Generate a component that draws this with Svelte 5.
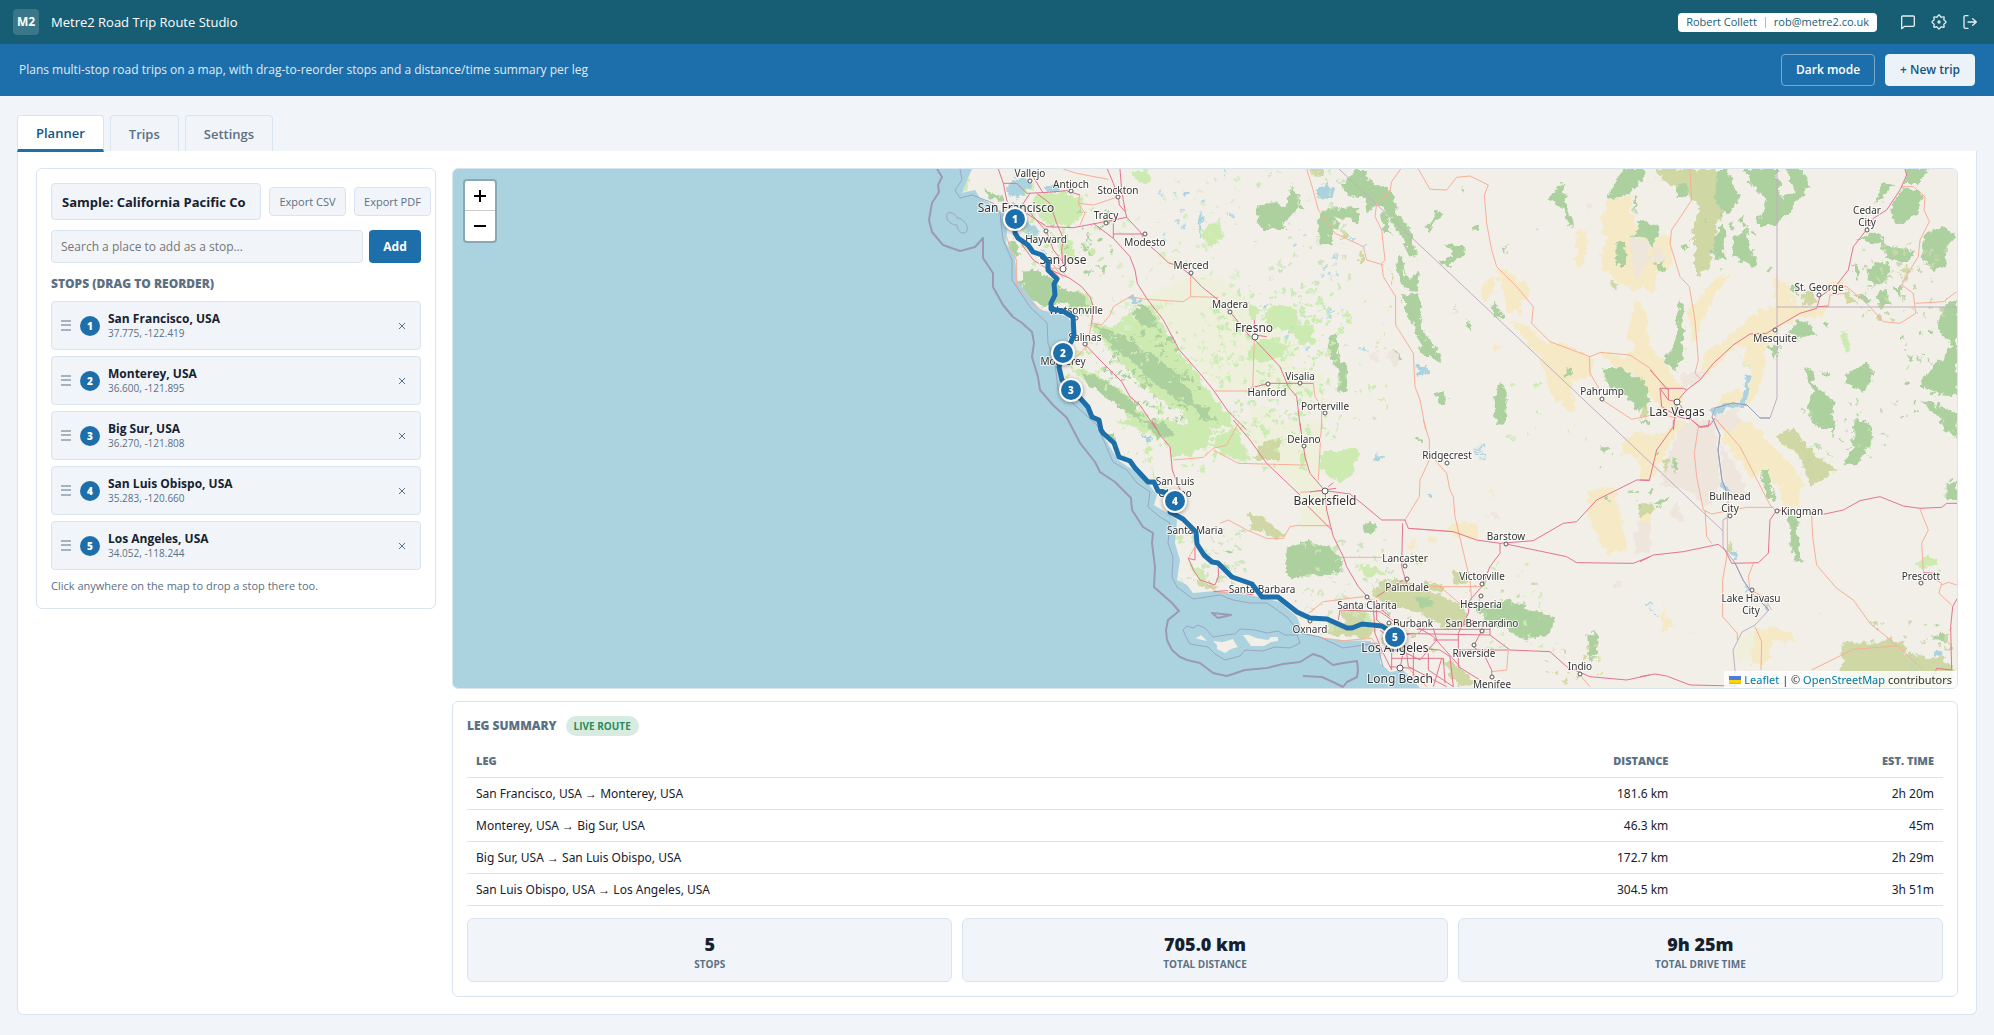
<script>
let tab = 'Planner'
let tripName = 'Sample: California Pacific Co'
let query = ''

const tabs = ['Planner', 'Trips', 'Settings']

let stops = [
  { name: 'San Francisco, USA', pos: '37.775, -122.419', x: 1015, y: 219 },
  { name: 'Monterey, USA', pos: '36.600, -121.895', x: 1063, y: 353 },
  { name: 'Big Sur, USA', pos: '36.270, -121.808', x: 1071, y: 390 },
  { name: 'San Luis Obispo, USA', pos: '35.283, -120.660', x: 1175, y: 501 },
  { name: 'Los Angeles, USA', pos: '34.052, -118.244', x: 1395, y: 637 }
]

const legs = [
  ['San Francisco, USA → Monterey, USA', '181.6 km', '2h 20m'],
  ['Monterey, USA → Big Sur, USA', '46.3 km', '45m'],
  ['Big Sur, USA → San Luis Obispo, USA', '172.7 km', '2h 29m'],
  ['San Luis Obispo, USA → Los Angeles, USA', '304.5 km', '3h 51m']
]

const totals = [
  ['5', 'Stops'],
  ['705.0 km', 'Total distance'],
  ['9h 25m', 'Total drive time']
]

// map tiles: each one has its own origin and is drawn at a third of its units
const tiles = [
  {
    x: 900, y: 160,
    farm: 'M700,440 760,400 870,345 950,350 1050,420 1050,700 960,690 900,620 840,550 790,470z M770,280 850,300 860,330 800,320z',
    light: 'M570,490 640,500 700,450 760,430 790,500 840,580 900,650 930,700 980,760 1000,800 880,810 850,760 780,720 700,650 640,580 580,520z M400,105 500,95 540,120 550,160 520,195 440,190 400,150z M500,615 560,630 620,660 700,720 760,790 765,810 710,810 640,710 550,660z M185,98 205,50 215,60 200,95z M690,30 740,30 750,65 710,70z M900,220 960,170 970,230 930,260z M480,390 560,400 590,440 560,470 500,440z M460,220 510,240 530,290 500,300z',
    wood: 'M370,335 410,330 450,350 480,380 540,400 575,440 520,440 470,430 430,440 380,410 360,370z M322,240 345,240 362,290 345,290z M250,85 300,110 310,125 270,115z M580,500 640,515 700,550 780,600 830,640 865,690 890,745 820,710 750,660 690,600 640,560z M690,450 730,430 760,470 770,510 720,490z M540,635 620,665 700,730 730,790 680,760 620,710 560,670z M550,330 570,320 560,350z M590,320 615,315 610,335z M880,730 920,740 950,790 900,770z',
    water: 'M325,80 345,55 395,60 390,90 355,115 325,105z M330,125 370,130 375,175 415,210 418,262 395,240 355,200z M430,85 450,72 480,78 470,92 440,95z M420,265 450,285 440,290z M850,90 870,100 860,115z M890,170 905,150 912,190 898,225z M685,415 705,405 725,425 710,432z',
    sand: '', pink: '', scrub: '',
    red: 'M622,27 640,70 655,110 658,135 675,155 M660,27 665,90 675,150 680,172 720,215 740,250 770,275 805,308 840,320 872,345 905,380 955,420 990,455 1050,530 M580,190 640,235 690,290 705,330 712,370 740,415 790,480 838,570 900,640 940,690 985,755 1040,810 M345,210 370,260 400,300 440,325 510,355 545,380 570,410 580,440 575,490 M555,553 600,600 640,640 665,665 690,710 720,735 770,810 M410,100 450,130 470,190 490,235 485,270 490,330 M380,160 440,200 520,203 600,188 680,172 M295,27 310,70 320,120 345,170 M310,70 350,70 380,100 445,97 500,92 540,105 M390,100 370,130 400,170 440,215 460,270 500,320 M640,190 V235 M385,27 430,100 M640,222 H735',
    orange: 'M540,105 535,130 555,160 540,195 M490,27 530,40 625,58 M535,130 580,135 620,122 655,110 M320,230 330,265 350,300 350,375 385,420 430,455 M575,490 605,495 630,465 640,440 690,410 740,418 850,425 872,410 955,412 M872,345 V410 M530,590 560,560 575,490 M945,693 1050,693 M450,320 480,355 M460,315 490,355 M475,315 500,350 M450,325 H500'
  },
  {
    x: 1250, y: 160,
    farm: 'M0,540 60,500 140,550 150,590 110,610 220,640 220,700 130,710 60,700 0,690z M0,740 60,740 100,810 0,810z',
    light: 'M40,460 80,430 140,450 145,490 190,495 192,550 150,555 130,520 60,500z M0,560 60,530 130,560 90,590 40,610 0,600z M0,430 30,450 20,480 0,480z',
    wood: 'M15,135 70,125 105,140 125,75 150,120 165,150 140,150 110,180 105,210 40,210 20,180z M205,170 240,135 280,150 325,140 325,185 280,170 260,180 270,210 250,215 245,250 210,255 205,210z M275,80 300,50 320,27 355,27 350,55 410,85 430,105 445,165 480,210 500,295 480,295 460,240 430,190 385,130 350,160 345,120 290,95z M390,145 415,180 425,230 400,200z M440,300 460,285 465,340 480,360 510,325 500,385 495,395 460,380 440,330z M455,410 500,400 518,440 510,480 530,540 560,570 580,610 540,590 515,580 495,500 470,460z M520,200 550,180 560,150 578,165 545,195 540,220z M585,255 640,255 645,280 610,310 600,325 565,305 610,290z M663,205 685,190 680,210z M898,115 938,62 945,120 975,195 955,205 945,155z M748,262 770,255 768,285z M720,440 735,432 765,480 745,470z M735,690 750,665 770,700 768,780 740,792z M550,700 580,695 592,730 565,725z M235,530 260,530 270,600 295,620 290,690 265,700 265,640 240,590z M630,85 645,85 640,97z M430,565 460,600 445,600z M610,470 618,435 614,440z M648,475 665,510 650,510z M950,620 970,640 950,650z',
    water: 'M190,95 230,70 255,90 245,115 205,110z M498,615 530,615 535,640 505,648z M860,204 872,207 866,210z M35,440 55,430 50,445z M295,220 303,235 297,240z',
    sand: 'M740,320 775,330 800,365 835,365 835,410 810,430 815,465 770,450 750,370z M700,370 735,345 730,400 700,430z M780,480 840,500 880,550 930,540 1000,580 1030,590 1025,650 960,660 975,750 950,750 900,700 880,610 830,540z M980,215 1010,210 1010,270 990,325 978,310z M730,545 755,560 740,575z',
    pink: 'M355,580 385,580 385,605 360,600z M405,580 440,570 460,600 430,620z M1005,130 1022,130 1020,155z',
    scrub: 'M175,27 225,27 225,50 195,50z M265,235 290,210 290,230z M328,270 342,290 342,315 330,300z M418,315 430,360 428,375z M365,98 385,95 382,110z',
    red: 'M13,480 15,540 90,620 115,680 140,710 152,810 M0,685 55,670 190,670 M15,525 50,530',
    orange: 'M170,27 185,75 205,150 255,220 340,260 350,300 400,315 M452,27 425,65 420,95 380,130 375,170 395,210 405,300 395,310 400,350 437,410 437,495 490,580 495,680 510,720 527,810 M505,27 540,88 590,90 620,52 660,48 715,75 703,105 710,190 725,270 740,320 800,380 850,440 845,490 900,545 1020,590 1050,578 M1018,590 1020,640 1050,690 M13,540 8,690 M190,670 195,710 215,740 215,810'
  },
  {
    x: 1600, y: 160,
    farm: '',
    light: 'M720,520 735,510 750,560 740,580z M395,555 450,630 440,620z',
    wood: 'M25,120 45,70 70,27 140,27 120,65 75,110z M350,27 380,27 400,60 415,130 380,162 350,130z M432,27 530,27 540,80 530,195 470,195 500,120 450,70z M560,27 600,27 630,70 600,110 575,150 530,195 535,110 590,100z M825,130 850,70 885,70 850,110z M920,27 990,27 950,75 910,75z M870,150 910,80 970,100 950,160 910,195 880,180z M95,230 125,180 180,200 165,240 155,270 140,235z M50,250 75,245 78,315 50,315z M395,240 440,215 450,250 468,310 460,325 400,285z M340,250 360,200 380,220 365,260 385,300 345,295z M235,420 248,430 250,590 225,630 190,600 230,540z M770,240 830,215 860,255 945,275 930,305 870,300 840,250z M975,220 1040,205 1070,230 1040,260 1035,325 1000,330 965,290z M1030,440 1070,420 1072,710 960,680 980,640 1060,560 1010,500z M570,510 600,480 630,490 650,530 610,530 590,540z M665,490 690,485 685,510z M5,630 60,625 130,660 150,720 120,750 60,700 30,680z M740,640 800,610 825,640 790,700 740,670z M615,620 645,640 640,670 700,720 700,810 650,800 620,750 640,700z M830,400 860,380 870,430 840,440z M880,380 910,375 900,420z M505,560 540,555 525,600z M755,310 785,330 770,360z M970,725 1072,760 1072,810 1000,760z M100,110 112,115 105,165z M230,80 260,65 265,115 235,110z M245,260 265,250 255,280z M165,320 185,300 195,340z M800,340 830,300 865,310 860,360 820,380z M760,400 815,415 800,435z M570,380 595,360 590,410z M660,635 690,640 680,655z M495,330 520,320 510,340z M385,190 400,190 395,210z',
    water: 'M438,645 450,640 440,720 430,748 380,740 345,775 325,750 345,745 400,730 425,735 433,680z M835,130 855,125 845,133z',
    sand: 'M25,120 95,110 90,160 120,200 90,230 200,230 220,310 170,340 165,400 130,380 100,390 50,360 10,330 0,280 20,240 0,180z M0,575 70,590 110,560 80,540 105,420 140,460 150,560 190,600 240,680 250,730 190,760 100,640 40,620z M520,350 560,370 590,440 690,440 660,470 600,470 540,500 500,570 460,640 430,610 440,560 400,560 360,610 300,660 310,580 380,540 430,490 480,450 530,440z M395,335 350,400 300,500 280,560 260,440 290,430 330,370z M450,640 500,580 490,640 450,740 380,700 430,690z M170,230 215,230 205,330 180,310z M690,365 740,360 725,395 680,400z M370,700 430,690 420,730 350,740z',
    pink: 'M90,230 140,240 150,290 120,350 100,340z M240,650 290,630 330,640 290,670 240,690z M340,770 400,745 430,780 400,810 350,810z M160,260 190,270 195,300 160,310z',
    scrub: 'M170,27 370,27 370,160 345,200 350,250 320,330 285,350 285,240 270,240 300,140 230,80 170,50z M605,400 640,390 650,430 610,440z M738,390 770,430 740,430z M905,325 930,310 920,345z M35,360 55,370 50,395 35,385z M130,720 150,750 140,780 120,770z',
    red: 'M915,27 920,45 900,90 860,150 820,175 795,215 760,260 745,330 710,375 660,410 650,445 600,460 540,495 500,520 450,522 400,555 340,610 300,660 260,690 230,725 220,810 M180,685 250,685 260,690 M180,685 205,720 230,725 M180,685 185,740 235,770 270,780 M205,685 205,720 M230,725 245,740 245,760 275,780 300,800 330,795 345,775 M655,440 685,438 M150,630 205,690',
    orange: 'M270,27 275,120 215,210 210,250 240,350 268,380 285,480 295,600 285,640 300,655 M0,577 90,585 150,625 200,690 M0,715 95,778 180,760 230,775 M905,80 940,80 975,110 972,150 988,185 960,240 955,290 930,330 905,375 940,400 947,460 900,490 850,485 800,430 740,380 710,375 M947,430 1030,425 1070,395 M685,438 690,405 740,400 M345,775 375,810'
  },
  {
    x: 1000, y: 420,
    farm: 'M680,0 900,0 900,210 820,140 740,50z',
    light: 'M340,0 520,0 640,30 620,85 560,110 520,110 490,60 440,40 400,20z M640,60 700,20 740,90 740,130 640,85z M530,345 550,350 545,370 530,365z M440,65 455,50 445,80z M565,430 610,450 620,480 600,490z M540,470 560,490 545,490z M610,380 620,400 605,400z',
    wood: 'M860,380 900,370 900,475 860,470z M672,388 698,392 690,405z M320,45 345,45 350,75 330,65z M430,0 500,10 520,40 490,60 450,30z M670,430 690,440 685,455z',
    water: 'M415,35 460,60 440,65z M880,535 890,545 885,550z',
    sand: '', pink: '',
    scrub: 'M745,280 800,300 855,345 830,355 750,320z M770,80 840,50 840,120 770,120z M580,480 650,495 640,510 600,500z',
    red: 'M455,0 480,45 510,80 517,150 540,210 M585,380 585,420 565,415 580,450 600,480 645,495 655,470 655,440 M700,0 750,60 800,130 900,225 M640,515 680,512 760,525',
    orange: 'M520,120 610,112 640,85 680,75 715,10 M640,90 715,130 900,135 M660,310 685,300 740,330 800,355 850,355 870,320 900,315 M645,515 700,520 M620,495 650,515 M585,380 565,415'
  },
  {
    x: 1300, y: 420,
    farm: 'M0,0 60,0 60,200 80,250 90,330 0,320z M0,120 60,100 60,150z M180,600 230,590 230,650 210,655z',
    light: 'M65,90 180,90 160,160 120,190 60,150z M180,430 215,440 260,460 200,470z M330,400 390,420 350,430z M0,90 20,100 15,150 0,150z M140,560 210,580 220,610 150,600z',
    wood: 'M0,360 90,380 125,410 120,455 60,470 0,460z M510,545 560,560 620,540 700,570 765,590 750,640 680,660 620,630 560,610z M860,640 890,640 895,700 870,720z M190,310 235,310 230,335 190,340z M345,50 360,50 358,72z M590,0 610,0 600,12z M900,75 925,85 915,95z M1015,0 1050,0 1050,20z M350,530 390,530 400,560 360,560z M860,720 900,710 880,720z',
    water: 'M375,225 390,215 390,235z M525,80 553,80 553,86 525,86z M525,92 553,92 553,98 525,98z M525,104 553,104 553,110 525,110z M530,116 553,116 553,120z M220,125 235,97 235,110 250,118z M1035,550 1050,555 1040,558z',
    sand: 'M445,310 530,310 530,360 460,345z M860,210 940,200 960,270 980,390 920,400 870,310z M320,380 345,350 350,385 330,400z M390,345 410,350 405,375 385,370z M980,50 1030,30 1050,70 1050,120 960,100z M565,210 580,210 580,235z',
    pink: 'M1020,300 1050,310 1050,400 1010,400 1000,350z M555,290 590,270 600,300z M935,485 965,485 965,505 940,505z',
    scrub: 'M215,520 250,480 310,480 360,510 440,530 500,570 500,620 430,620 350,570 290,570 240,540z M110,600 220,620 210,655 130,650 60,640z M430,720 480,740 520,790 470,800z M455,450 500,460 500,495 460,490z M1010,260 1050,250 1050,280 1020,290z M370,490 430,490 425,515 370,505z M120,575 200,580 190,610 140,610z M385,680 420,690 400,700z',
    red: 'M0,10 15,110 30,160 75,212 80,270 100,350 130,410 140,440 175,500 215,545 270,590 M75,212 150,222 185,250 245,300 315,300 325,325 460,335 530,360 600,370 700,362 790,310 830,305 890,240 1010,180 1050,180 M618,372 800,410 830,428 1000,430 1050,410 M600,370 600,400 570,440 545,500 510,540 505,580 475,640 475,740 540,780 M308,310 305,440 320,490 M230,530 310,480 M20,255 95,330 M30,216 108,205 M85,200 100,188 M120,570 240,575 290,610 M220,560 225,640 245,690 275,750 M285,640 570,645 M400,625 410,660 360,720 320,700 M290,680 420,690 450,710 460,800 M275,715 430,715 435,790 M350,620 400,650 480,740 M570,645 630,690 750,695 800,740 870,770 980,780 1050,765 M545,632 520,680 545,700 M400,660 475,660 M475,690 625,690 M320,700 325,740 440,800 M385,700 385,750 460,800 M545,690 575,750 575,770 M570,625 V645 M350,628 H570 M275,680 V750 M340,670 V790 M240,630 320,700 M270,740 340,745 M425,715 400,800 M480,620 520,600 M355,640 380,615 M120,570 115,600 M230,540 230,600 290,650 340,640 M320,645 300,745',
    orange: 'M370,0 388,60 388,120 360,180 358,230 315,300 M405,120 440,160 450,210 460,230 465,290 510,480 515,540 M130,412 245,412 M25,580 70,545 110,540 190,530 M320,500 545,500 M325,325 460,335 M420,500 490,560 M625,690 620,750 575,755 M840,765 870,800 M65,0 55,180 M0,317 90,317 M0,135 20,135 M70,655 130,662 215,655 245,700 M0,217 75,212 M325,745 380,800'
  },
  {
    x: 1640, y: 420,
    farm: 'M295,650 340,625 340,700 290,740z',
    light: 'M825,440 850,415 890,412 885,435 855,440z M895,450 910,450 900,460z',
    wood: 'M640,0 680,0 700,50 660,130 610,130 640,80z M360,150 380,150 405,240 385,240z M445,295 470,290 482,425 465,425 445,340z M920,190 952,170 952,240 920,240z M900,0 952,0 952,50 910,30z M560,0 590,0 580,55z M97,115 115,115 110,160 98,150z M45,245 90,235 60,260z M880,610 900,615 890,620z M880,655 905,635 915,665z',
    water: 'M238,180 255,190 260,215 245,200z M275,390 287,400 285,420 270,410z M318,485 325,515 315,515z M370,545 388,565 380,570z M15,550 40,555 20,557z M30,565 50,570 35,573z M40,580 60,590 45,592z M890,690 905,690 900,715 885,705z M535,580 545,577 538,590z',
    sand: 'M0,50 60,40 120,0 150,0 110,40 60,130 30,180 0,170z M240,0 330,10 380,60 470,150 500,200 470,210 400,190 370,150 330,170 250,60z M345,625 400,620 470,650 460,670 400,660 385,730 330,735 340,680z M65,540 80,590 110,610 70,640z M140,640 170,635 160,642z M0,290 30,280 20,340 0,400z M420,200 480,200 475,260 430,260z M320,10 370,40 400,100 340,80z',
    pink: 'M130,0 225,0 240,190 210,260 180,250 150,210 60,200 80,110 110,60z M240,60 300,160 330,230 270,240 250,180z M0,310 20,300 10,360z M110,240 130,310 90,290z',
    scrub: 'M405,50 460,25 500,80 590,150 510,200 480,110 440,80z M605,668 730,668 750,645 760,665 800,665 790,700 850,715 900,710 940,740 930,800 605,800z M880,655 920,640 930,670z M68,120 82,115 80,160z M0,255 40,250 50,270 0,290z M260,360 285,390 270,400z',
    red: 'M0,425 40,405 130,395 235,373 255,390 275,430 355,428 385,400 390,300 410,270 435,272 M550,283 610,270 660,242 720,230 790,258 840,265 905,262 920,250 952,250 M0,770 45,762 80,768 150,795 290,798 M0,180 28,182 50,90 100,20 100,0 M155,0 180,22 205,20 208,0 M850,458 885,460 M952,535 938,560 932,620 935,750 890,745 880,770',
    orange: 'M175,20 163,100 170,170 190,270 215,282 320,262 400,262 M230,0 300,80 390,255 405,270 M262,290 262,400 248,480 248,590 292,640 292,660 M515,285 518,350 530,435 590,505 640,540 690,610 770,675 850,750 M345,620 365,665 363,750 M515,750 640,688 770,678 M840,268 865,330 845,370 850,455 M852,458 905,490 897,520 935,555 M905,495 925,487 950,495 M340,430 325,470 330,510 370,530 395,570 M195,270 200,350 215,370'
  }
]

const layers = ['farm', 'sand', 'pink', 'light', 'scrub', 'wood', 'water']

// name, x, y, and 1 for the bigger cities; the dot follows when there is one
const places = [
  ['Vallejo', 1030, 177, 0, 1030, 181], ['Antioch', 1071, 188, 0, 1071, 191], ['Stockton', 1118, 194, 0, 1118, 197],
  ['San Francisco', 1016, 212, 1], ['Tracy', 1106, 219, 0, 1106, 223], ['Hayward', 1046, 243, 0, 1046, 231],
  ['Modesto', 1145, 246, 0, 1145, 234], ['San Jose', 1063, 264, 1, 1063, 269], ['Merced', 1191, 269, 0, 1191, 273],
  ['Watsonville', 1076, 314, 0, 1076, 318], ['Madera', 1230, 308, 0, 1230, 312], ['Salinas', 1085, 341, 0, 1085, 344],
  ['Fresno', 1254, 332, 1, 1255, 337], ['Monterey', 1063, 365, 0], ['Visalia', 1300, 380, 0, 1300, 383],
  ['Hanford', 1267, 396, 0, 1268, 384], ['Porterville', 1325, 410, 0, 1325, 413], ['Delano', 1304, 443, 0, 1304, 446],
  ['Ridgecrest', 1447, 459, 0, 1447, 463], ['San Luis', 1175, 485, 0], ['Obispo', 1175, 497, 0],
  ['Bakersfield', 1325, 505, 1, 1325, 491], ['Santa Maria', 1195, 534, 0], ['Barstow', 1506, 540, 0, 1506, 544],
  ['Lancaster', 1405, 562, 0, 1405, 566], ['Victorville', 1482, 580, 0, 1482, 584], ['Palmdale', 1407, 591, 0, 1407, 579],
  ['Santa Barbara', 1262, 593, 0], ['Santa Clarita', 1367, 609, 0, 1367, 597], ['Hesperia', 1481, 608, 0, 1481, 596],
  ['Burbank', 1413, 627, 0, 1389, 623], ['San Bernardino', 1482, 627, 0, 1482, 631], ['Oxnard', 1310, 633, 0, 1310, 621],
  ['Los Angeles', 1395, 652, 1], ['Riverside', 1474, 657, 0, 1474, 645], ['Indio', 1580, 670, 0, 1580, 674],
  ['Long Beach', 1400, 683, 1, 1400, 668], ['Menifee', 1492, 688, 0, 1492, 677],
  ['Cedar', 1867, 214, 0], ['City', 1867, 226, 0, 1867, 230], ['St. George', 1819, 291, 0, 1819, 295],
  ['Mesquite', 1775, 342, 0, 1775, 330], ['Pahrump', 1602, 395, 0, 1602, 399], ['Las Vegas', 1677, 416, 1, 1677, 402],
  ['Bullhead', 1730, 500, 0], ['City', 1730, 512, 0, 1730, 516], ['Kingman', 1802, 515, 0, 1777, 511],
  ['Prescott', 1921, 580, 0, 1921, 583], ['Lake Havasu', 1751, 602, 0], ['City', 1751, 614, 0, 1752, 590]
]

// small patches of vegetation: x, y, width, height, how many, colour
const scatter = [
  [1100, 175, 150, 110, 60, '#d6edc2'], [1110, 300, 130, 80, 90, '#d6edc2'], [1210, 290, 130, 150, 260, '#c8ecb4'],
  [1100, 330, 80, 50, 60, '#add19e'], [1130, 370, 70, 50, 60, '#add19e'],
  [1020, 180, 80, 80, 50, '#cdebb0'], [1250, 170, 100, 120, 50, '#cfe3bd'], [1300, 300, 90, 120, 50, '#cdebb0'],
  [1120, 400, 170, 70, 90, '#cdebb0'], [1110, 470, 60, 20, 10, '#cdebb0'], [1185, 530, 60, 55, 45, '#cfe3bd'],
  [1300, 540, 90, 90, 80, '#cfe3bd'], [1380, 570, 160, 70, 50, '#c8d7ab'], [1480, 560, 60, 90, 25, '#cdebb0'],
  [1860, 240, 90, 80, 70, '#c8d7ab'], [1800, 400, 100, 60, 30, '#b9d9ab'], [1900, 330, 50, 90, 30, '#add19e'],
  [1870, 620, 80, 60, 45, '#c8d7ab'], [1700, 180, 60, 90, 14, '#add19e'], [1500, 380, 100, 60, 14, '#cdebb0'],
  [1600, 450, 60, 60, 12, '#add19e'], [1540, 640, 60, 40, 18, '#d6d99f'], [1280, 230, 90, 120, 24, '#b5dbe4'],
  [1150, 170, 80, 70, 20, '#b5dbe4'], [1050, 210, 60, 60, 30, '#add19e'], [1065, 330, 50, 60, 30, '#cdebb0']
]

let seed = 7
function rnd () {
  seed = (seed * 16807) % 2147483647
  return seed / 2147483647
}

function patches ([x, y, w, h, n]) {
  let d = ''
  for (let i = 0; i < n; i++) {
    const s = 1 + Math.round(rnd() * 3)
    d += `M${Math.round(x + rnd() * w)},${Math.round(y + rnd() * h)}l${s},-1 1,${s} -${s},1z`
  }
  return d
}

function remove (i) {
  stops = stops.filter((s, n) => n !== i)
}
</script>

<div class="app">
  <header class="topbar">
    <span class="logo">M2</span>
    <h1>Metre2 Road Trip Route Studio</h1>
    <div class="user"><span>Robert Collett</span><i></i><span>rob@metre2.co.uk</span></div>
    <nav class="icons">
      <button aria-label="Messages">
        <svg viewBox="0 0 24 24"><path d="M21.500 17a1.500 1.500 0 0 1-1.500 1.500H7L2.500 22V4.500A1.500 1.500 0 0 1 4 3h16a1.500 1.500 0 0 1 1.500 1.500z" /></svg>
      </button>
      <button aria-label="Settings">
        <svg viewBox="0 0 24 24">
          <path d="M12 1.500c1.600 0 1.800 2.700 3.400 3.300 1.600.6 3.200-1.300 4.200-.4 1.100 1.100-.9 2.800-.3 4.300.6 1.500 3.200 1.700 3.200 3.300s-2.600 1.800-3.200 3.300c-.6 1.500 1.400 3.200.3 4.300-1 1-2.700-1-4.200-.4-1.600.6-1.800 3.300-3.400 3.300s-1.800-2.700-3.400-3.300c-1.500-.6-3.200 1.400-4.200.4-1.100-1.100.9-2.800.3-4.300-.6-1.500-3.200-1.700-3.200-3.300s2.600-1.800 3.200-3.300c.6-1.500-1.400-3.200-.3-4.300 1-.9 2.700 1 4.200.4 1.600-.6 1.800-3.300 3.400-3.300z" />
          <circle cx="12" cy="12" r="1.500" />
        </svg>
      </button>
      <button aria-label="Log out">
        <svg viewBox="0 0 24 24"><path d="M9 21.500H5a2 2 0 0 1-2-2v-15a2 2 0 0 1 2-2h4M16 17l5.500-5L16 7M21 12H9" /></svg>
      </button>
    </nav>
  </header>

  <div class="banner">
    <p>Plans multi-stop road trips on a map, with drag-to-reorder stops and a distance/time summary per leg</p>
    <button class="ghost">Dark mode</button>
    <button class="new">+ New trip</button>
  </div>

  <main>
    <div class="tabs">
      {#each tabs as t}
        <button class:active={tab === t} on:click={() => tab = t}>{t}</button>
      {/each}
    </div>

    <div class="panel">
      <section class="card planner">
        <div class="row name">
          <input aria-label="Trip name" bind:value={tripName}>
          <button class="small">Export CSV</button>
          <button class="small">Export PDF</button>
        </div>
        <div class="row search">
          <input aria-label="Search a place" placeholder="Search a place to add as a stop..." bind:value={query}>
          <button>Add</button>
        </div>
        <h2>Stops (drag to reorder)</h2>
        <ol>
          {#each stops as stop, i}
            <li draggable="true">
              <svg class="grip" viewBox="0 0 10 11"><path d="M0 1h10M0 5h10M0 10h10" /></svg>
              <span class="num">{i + 1}</span>
              <div class="place">
                <strong>{stop.name}</strong>
                <small>{stop.pos}</small>
              </div>
              <button aria-label="Remove {stop.name}" on:click={() => remove(i)}>
                <svg viewBox="0 0 8 8"><path d="M1 1l6 6M7 1l-6 6" /></svg>
              </button>
            </li>
          {/each}
        </ol>
        <p class="hint">Click anywhere on the map to drop a stop there too.</p>
      </section>

      <div class="side">
        <section class="map">
          <svg class="canvas" viewBox="453 169 1504 519" preserveAspectRatio="xMidYMid slice">
            <defs>
              <filter id="rough" x="0" y="0" width="100%" height="100%" color-interpolation-filters="sRGB">
                <feTurbulence type="fractalNoise" baseFrequency="0.15" numOctaves="3" seed="4" />
                <feDisplacementMap in="SourceGraphic" scale="10" xChannelSelector="R" yChannelSelector="G" />
              </filter>
            </defs>
            <rect class="land" x="453" y="169" width="1504" height="519" />
            <g filter="url(#rough)">
              {#each layers as layer}
                {#each tiles as tile}
                  <path class={layer} transform="translate({tile.x} {tile.y}) scale(.33333)" d={tile[layer]} />
                {/each}
              {/each}
              {#each scatter as s}
                <path fill={s[5]} d={patches(s)} />
              {/each}
            </g>

            <path class="water" d="M453,169H972L968,178 962,193 975,190 980,198 989,203 1006,215 1007,232 1006,243 1015,257 1017,280 1027,293 1040,310 1052,312 1068,317 1073,327 1072,343 1063,357 1058,363 1059,373 1065,390 1077,398 1087,408 1100,423 1102,434 1118,460 1133,470 1148,483 1157,495 1154,505 1167,513 1177,520 1175,543 1180,560 1177,580 1187,585 1193,593 1215,591 1233,593 1260,597 1280,602 1297,617 1303,632 1320,637 1340,640 1370,641 1382,650 1380,663 1390,672 1403,670 1413,680 1420,688H453z" />
            <path class="land" d="M1195,638l3,-1 3,-2 3,3 3,3 -5,-1z M1213,641l10,1 10,-3 2,4 3,4 -7,2 -6,4 -8,-4 0,-4z M1243,635l6,0 7,3 12,2 3,-3 7,0 0,4 -7,1 -7,4 -13,0z" />

            <path class="shore" d="M960,169 962,180 955,190 960,198 972,195 993,203 1000,213 1003,240 1012,260 1012,280 1030,307 1047,323 1048,343 1055,363 1058,390 1077,407 1097,425 1113,462 1127,470 1137,483 1150,492 1148,507 1160,517 1170,523 1168,543 1173,557 1172,577 1177,587 1193,599 1220,595 1233,600 1250,603 1267,603 1287,617 1300,633 1320,637 1343,648 1377,643 1383,667 M947,214c2,-4 10,1 10,4 6,0 12,8 10,13 -4,5 -10,0 -10,-6 -6,0 -12,-5 -10,-11z M1183,630 1187,626 1193,628 1198,625 1205,628 1213,637 1225,635 1235,634 1240,629 1255,630 1267,633 1278,631 1285,635 1297,635 1300,643 1290,648 1275,647 1263,651 1245,650 1240,656 1225,660 1215,654 1208,647 1190,644 1186,637z" />
            <path class="limit" d="M937,169 942,177 938,185 939,192 932,203 929,220 932,232 943,245 960,251 975,247 983,238 983,258 993,273 993,287 1003,305 1013,317 1022,323 1032,332 1034,343 1032,357 1038,377 1040,390 1053,405 1067,418 1080,443 1095,462 1100,472 1115,482 1131,498 1132,510 1143,527 1153,533 1152,543 1155,567 1154,587 1172,603 1179,611 1168,620 1166,630 1167,640 1172,650 1180,657 1187,660 1200,663 1213,673 1227,676 1245,670 1267,668 1283,664 1300,662 1313,654 1322,657 1333,665 1343,663 1357,661 1358,670 1357,677 1347,682 1343,687 M1303,676 1322,677 1333,682 1343,687 M1212,613 1231,615 1218,618z" />
            <path class="border" d="M1339,169 1723,531 M1777,169V398L1770,418 1760,418 1747,405 1733,403 1715,408 1712,417 1720,435 1718,450 1722,480 1728,495 1728,517 1723,520 1723,547 1735,563 1743,580 1752,593 1769,610 1755,625 1742,632 1733,650 1735,670V687 M1777,307H1957" />
            <path class="river" d="M1770,418 1760,418 1747,405 1733,403 1715,408 M1712,417 1720,435 1718,450 1722,480 1728,495 M1735,563 1743,580 1752,593 1769,610" />

            {#each tiles as tile}
              <g transform="translate({tile.x} {tile.y}) scale(.33333)">
                <path class="trunk" d={tile.orange} />
                <path class="motorway" d={tile.red} />
              </g>
            {/each}

            {#each places as [name, x, y, big, dx, dy]}
              {#if dx}
                <circle class="dot" cx={dx} cy={dy} r={big ? 3 : 2} />
              {/if}
              <text class="label" class:big={big} {x} {y}>{name}</text>
            {/each}

            <path class="route" d="M1015,219 1015,233 1018,238 1028,245 1033,252 1042,255 1048,262 1048,270 1057,279 1054,284 1055,295 1051,303 1051,309 1063,311 1073,317 1074,335 1071,342 1063,353 1059,367 1062,380 1071,390 1080,398 1088,407 1092,417 1099,420 1101,430 1103,433 1114,443 1119,457 1130,461 1135,468 1148,482 1154,482 1158,491 1167,493 1175,501 1170,512 1183,519 1196,532 1197,544 1204,555 1212,562 1218,563 1232,577 1252,584 1262,597 1278,597 1297,612 1310,618 1327,619 1347,628 1352,628 1362,624 1382,626 1388,630 1395,637" />

            {#each stops as stop, i}
              <circle class="halo" cx={stop.x} cy={stop.y} r="12" />
              <circle class="pin" cx={stop.x} cy={stop.y} r="10" />
              <text class="pin-num" x={stop.x} y={stop.y + 4}>{i + 1}</text>
            {/each}
          </svg>
          <div class="zoom">
            <button aria-label="Zoom in"><svg viewBox="0 0 12 12"><path d="M6 0v12M0 6h12" /></svg></button>
            <button aria-label="Zoom out"><svg viewBox="0 0 12 12"><path d="M0 6h12" /></svg></button>
          </div>
          <div class="credit">
            <svg viewBox="0 0 12 8"><path fill="#4c7be1" d="M0 0h12v4H0z" /><path fill="#ffd500" d="M0 4h12v3H0z" /><path fill="#e0bc00" d="M0 7h12v1H0z" /></svg>
            <a href="#leaflet">Leaflet</a> | © <a href="#osm">OpenStreetMap</a> contributors
          </div>
        </section>

        <section class="card summary">
          <div class="head">
            <h2>Leg summary</h2>
            <span class="badge">Live route</span>
          </div>
          <table>
            <thead>
              <tr><th>Leg</th><th>Distance</th><th>Est. time</th></tr>
            </thead>
            <tbody>
              {#each legs as [leg, distance, time]}
                <tr><td>{leg}</td><td>{distance}</td><td>{time}</td></tr>
              {/each}
            </tbody>
          </table>
          <div class="totals">
            {#each totals as [value, label]}
              <div class="total">
                <b>{value}</b>
                <span>{label}</span>
              </div>
            {/each}
          </div>
        </section>
      </div>
    </div>
  </main>
</div>

<style>
:global(body) {
  background: #f1f5fa;
}
.app {
  font-family: "Open Sans", "Noto Sans", sans-serif;
  font-size: 12px;
  line-height: 16px;
  color: #17212e;
}
button, input {
  font: inherit;
  box-sizing: border-box;
  margin: 0;
}
button {
  cursor: pointer;
}
h1, h2, p, ol {
  margin: 0;
  padding: 0;
}
.topbar {
  display: flex;
  align-items: center;
  height: 44px;
  padding: 0 16px 0 13px;
  background: #175e75;
  color: #fff;
}
.logo {
  width: 26px;
  line-height: 26px;
  border-radius: 4px;
  background: #3a778a;
  text-align: center;
  font-weight: 700;
}
h1 {
  flex: 1;
  margin-left: 12px;
  font-size: 13px;
  font-weight: 500;
}
.user {
  display: flex;
  align-items: center;
  gap: 8px;
  height: 19px;
  padding: 0 8px;
  border-radius: 4px;
  background: #fff;
  color: #175e75;
  font-size: 11px;
}
.user i {
  width: 1px;
  height: 11px;
  background: #a3c3cb;
}
.icons {
  display: flex;
  gap: 15px;
  margin-left: 23px;
}
.icons button {
  display: flex;
  width: 16px;
  height: 16px;
  padding: 0;
  border: 0;
  background: none;
}
.icons svg {
  width: 16px;
  height: 16px;
  fill: none;
  stroke: #e3eef1;
  stroke-width: 2;
  stroke-linecap: round;
  stroke-linejoin: round;
}
.banner {
  display: flex;
  align-items: center;
  gap: 10px;
  height: 52px;
  padding: 0 19px;
  background: #1d6fab;
  color: #e0ebf4;
}
.banner p {
  flex: 1;
}
.banner button {
  height: 32px;
  padding: 0 14px;
  border: 1px solid #77a9cd;
  border-radius: 4px;
  background: none;
  color: #fff;
  font-weight: 600;
}
.banner .new {
  border-color: #ecf3f8;
  background: #ecf3f8;
  color: #16557f;
}
main {
  padding: 19px 17px 21px;
}
.tabs {
  display: flex;
  gap: 6px;
}
.tabs button {
  height: 36px;
  padding: 0 18px;
  border: 1px solid #d8e4f0;
  border-bottom: 0;
  border-radius: 4px 4px 0 0;
  background: #f1f5fa;
  color: #5b7083;
  font-size: 13px;
  font-weight: 600;
}
.tabs .active {
  height: 37px;
  margin-bottom: -1px;
  border-bottom: 3px solid #1d6fab;
  background: #fff;
  color: #16557f;
  position: relative;
}
.panel {
  display: grid;
  grid-template-columns: 400px 1fr;
  align-items: start;
  gap: 16px;
  padding: 17px 18px;
  border: 1px solid #d8e4f0;
  border-top: 0;
  border-radius: 0 0 6px 6px;
  background: #fff;
}
.card {
  border: 1px solid #d8e4f0;
  border-radius: 6px;
  padding: 14px;
  background: #fff;
}
.row {
  display: flex;
  align-items: center;
}
.row input {
  padding: 0 9px;
  border: 1px solid #d8e4f0;
  border-radius: 4px;
  background: #f1f5fa;
  color: #17212e;
}
.name {
  gap: 8px;
}
.name input {
  flex: 0 0 210px;
  height: 37px;
  padding: 0 10px;
  font-size: 13px;
  font-weight: 700;
}
.small {
  flex: none;
  width: 77px;
  height: 29px;
  padding: 0;
  border: 1px solid #d8e4f0;
  border-radius: 4px;
  background: #f1f5fa;
  color: #5b7083;
  font-size: 11px;
}
.search {
  gap: 6px;
  margin: 10px 0 13px;
}
.search input {
  flex: 1;
  height: 33px;
}
.search input::placeholder {
  color: #757575;
}
.search button {
  width: 52px;
  height: 33px;
  border: 0;
  border-radius: 4px;
  background: #1d6fab;
  color: #fff;
  font-weight: 700;
}
h2 {
  color: #5b7083;
  font-size: 12px;
  font-weight: 800;
  text-transform: uppercase;
}
ol {
  display: grid;
  gap: 6px;
  margin: 9px 0 8px;
  list-style: none;
}
li {
  display: flex;
  align-items: center;
  box-sizing: border-box;
  height: 49px;
  padding: 0 14px 0 9px;
  border: 1px solid #d8e4f0;
  border-radius: 4px;
  background: #f1f5fa;
}
.grip {
  width: 10px;
  height: 11px;
  margin-right: 9px;
  stroke: #5b7083;
}
.num {
  width: 20px;
  margin-right: 8px;
  border-radius: 50%;
  background: #1d6fab;
  color: #fff;
  text-align: center;
  font-size: 10px;
  line-height: 20px;
  font-weight: 800;
}
.place {
  flex: 1;
  display: grid;
}
.place strong {
  font-weight: 700;
}
.place small {
  color: #5b7083;
  font-size: 10px;
  line-height: 13px;
}
li button {
  display: flex;
  padding: 0;
  border: 0;
  background: none;
}
li button svg {
  width: 8px;
  height: 8px;
  stroke: #5b7083;
}
.hint {
  color: #5b7083;
  font-size: 11px;
}
.side {
  display: grid;
  gap: 12px;
  min-width: 0;
}
.map {
  position: relative;
  height: 519px;
  border: 1px solid #d8e4f0;
  border-radius: 6px;
  overflow: hidden;
}
.canvas {
  display: block;
  width: 100%;
  height: 100%;
}
.land { fill: #f2efe9; }
.farm { fill: #eef0dc; }
.sand { fill: #f5e9c6; }
.pink { fill: #eee5dc; }
.light { fill: #cdebb0; }
.scrub { fill: #cfd8a4; }
.wood { fill: #add19e; }
.water { fill: #aad3df; }
.shore, .limit, .border, .river, .trunk, .motorway, .route {
  fill: none;
  stroke-linejoin: round;
}
.shore {
  stroke: #9ba6c2;
}
.limit {
  stroke: #9c98b6;
  stroke-width: 2;
}
.border {
  stroke: #c0adc0;
}
.river {
  stroke: #8f9dbd;
}
.trunk {
  stroke: #f7ae98;
  stroke-width: 3;
}
.motorway {
  stroke: #e4728f;
  stroke-width: 3;
}
.route {
  stroke: #1d6fab;
  stroke-width: 5;
  stroke-linecap: round;
}
.dot {
  fill: #fff;
  stroke: #555;
}
.label {
  font-family: "Noto Sans", sans-serif;
  font-size: 10px;
  text-anchor: middle;
  fill: #333;
  stroke: #fffc;
  stroke-width: 2;
  paint-order: stroke;
}
.label.big {
  font-size: 12px;
}
.halo {
  fill: #fff;
  filter: drop-shadow(0 1px 2px #0006);
}
.pin {
  fill: #1d6fab;
}
.pin-num {
  fill: #fff;
  font-size: 10px;
  font-weight: 800;
  text-anchor: middle;
}
.zoom {
  position: absolute;
  top: 10px;
  left: 10px;
  width: 30px;
  border: 2px solid #88a9b2;
  border-radius: 4px;
  background: #fff;
}
.zoom button {
  display: flex;
  align-items: center;
  justify-content: center;
  width: 30px;
  height: 30px;
  padding: 0;
  border: 0;
  background: none;
}
.zoom button:first-child {
  border-bottom: 1px solid #ccc;
}
.zoom svg {
  width: 12px;
  height: 12px;
  stroke: #000;
  stroke-width: 2;
}
.credit {
  position: absolute;
  right: 0;
  bottom: 0;
  padding: 0 5px;
  background: #fffc;
  color: #333;
  font-family: "Noto Sans", sans-serif;
  font-size: 11px;
  line-height: 17px;
}
.credit svg {
  width: 12px;
  height: 8px;
}
.credit a {
  color: #0078a8;
  text-decoration: none;
}
.head {
  display: flex;
  align-items: center;
  gap: 9px;
}
.badge {
  padding: 0 8px;
  border-radius: 10px;
  background: #d8ebe1;
  color: #2e8b57;
  font-size: 10px;
  line-height: 20px;
  font-weight: 700;
  text-transform: uppercase;
}
table {
  width: 100%;
  margin-top: 9px;
  border-collapse: collapse;
}
th, td {
  box-sizing: border-box;
  height: 32px;
  padding: 1px 9px 0;
  border-bottom: 1px solid #d8e4f0;
  text-align: right;
}
td {
  font-family: "Noto Sans", sans-serif;
}
th {
  color: #5b7083;
  font-size: 11px;
  font-weight: 800;
  text-transform: uppercase;
}
th:first-child, td:first-child {
  text-align: left;
}
th:last-child {
  width: 18%;
}
.totals {
  display: grid;
  grid-template-columns: repeat(3, 1fr);
  gap: 10px;
  margin-top: 12px;
}
.total {
  display: grid;
  padding: 13px 0 9px;
  border: 1px solid #d8e4f0;
  border-radius: 6px;
  background: #f1f5fa;
  text-align: center;
}
.total b {
  font-size: 18px;
  line-height: 24px;
  font-weight: 800;
}
.total span {
  color: #5b7083;
  font-size: 10px;
  font-weight: 700;
  text-transform: uppercase;
}
</style>
